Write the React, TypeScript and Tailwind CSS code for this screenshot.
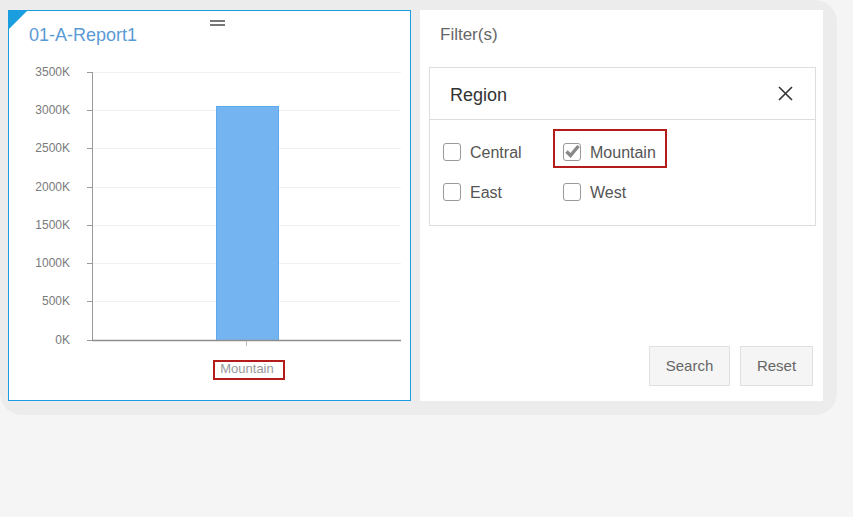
import React from 'react'

const ticks = [
  { label: '3500K', y: 72 },
  { label: '3000K', y: 110 },
  { label: '2500K', y: 148 },
  { label: '2000K', y: 187 },
  { label: '1500K', y: 225 },
  { label: '1000K', y: 263 },
  { label: '500K', y: 301 },
  { label: '0K', y: 340 },
]

const Chart = () => {
  return (
    <svg width="401" height="330" className="block">
      <g transform="translate(-9,-58)">
        {ticks.map((t) => (
          <g key={t.label}>
            {t.y !== 340 && <line x1="93" x2="401" y1={t.y + 0.5} y2={t.y + 0.5} stroke="#f1f1f1" strokeWidth="1" />}
            <line x1="87" x2="92" y1={t.y + 0.5} y2={t.y + 0.5} stroke="#999" strokeWidth="1" />
            <text x="70" y={t.y + 4} textAnchor="end" fontSize="12" fill="#7a7a7a" fontFamily="'Liberation Sans', Arial, sans-serif">
              {t.label}
            </text>
          </g>
        ))}
        <line x1="92.5" x2="92.5" y1="72" y2="341" stroke="#999" strokeWidth="1" />
        <rect x="216.5" y="106.5" width="62" height="234" fill="#74b4f0" stroke="#5ea8ec" strokeWidth="1" />
        <line x1="92" x2="401" y1="340.5" y2="340.5" stroke="#8f8f8f" strokeWidth="1.3" />
        <line x1="246.5" x2="246.5" y1="341" y2="346" stroke="#bbb" strokeWidth="1" />
        <text x="247" y="373" textAnchor="middle" fontSize="13" fill="#999" fontFamily="'Liberation Sans', Arial, sans-serif">
          Mountain
        </text>
        <rect x="214" y="361" width="70" height="18" fill="none" stroke="#b41c1c" strokeWidth="2" />
      </g>
    </svg>
  )
}

const Box = ({ checked }: { checked?: boolean }) => (
  <span className="relative w-[18px] h-[18px] rounded-[3px] border border-[#999] bg-white shrink-0">
    {checked && (
      <svg width="18" height="18" viewBox="0 0 18 18" className="absolute -left-px -top-px">
        <path d="M3.5 8.5 L7.5 12.5 L15.5 3" fill="none" stroke="#888" strokeWidth="3.4" strokeLinejoin="miter" />
      </svg>
    )}
  </span>
)

const Option = ({ label, checked, marked }: { label: string; checked?: boolean; marked?: boolean }) => (
  <label className="relative flex items-center w-[120px] h-[18px]">
    <Box checked={checked} />
    <span className="ml-[9px] mt-[2px] text-[16px] text-[#555] leading-none">{label}</span>
    {marked && <span className="absolute -left-[10px] -top-[14px] w-[114px] h-[39px] border-2 border-[#b41c1c]" />}
  </label>
)

const App = () => {
  return (
    <div className="w-[853px] h-[517px] bg-[#f5f5f5] font-['Liberation_Sans',Arial,sans-serif]">
      <div className="w-[837px] h-[415px] bg-[#ececec] rounded-tr-[22px] rounded-b-[22px] pt-[10px] pl-[8px] flex gap-[9px]">
        {/* report panel */}
        <div className="relative w-[403px] h-[391px] bg-white border border-[#1a9ee0]">
          <span className="absolute left-0 top-0 w-0 h-0 border-t-[18px] border-t-[#1a9ee0] border-r-[18px] border-r-transparent" />
          <span className="absolute left-[201px] top-[9px] w-[15px] h-[2px] bg-[#777]" />
          <span className="absolute left-[201px] top-[13px] w-[15px] h-[2px] bg-[#777]" />
          <div className="h-[47px] pt-[13px] pl-[20px] text-[18px] leading-[22px] text-[#5b9bd5]">01-A-Report1</div>
          <Chart />
        </div>

        {/* filter panel */}
        <div className="w-[403px] h-[391px] bg-white flex flex-col">
          <div className="pt-[14px] pl-[20px] text-[17px] leading-[22px] text-[#666]">Filter(s)</div>
          <div className="mt-[21px] ml-[9px] w-[387px] border border-[#ddd]">
            <div className="h-[52px] border-b border-[#ddd] flex items-center justify-between pl-[20px] pr-[22px]">
              <span className="mt-[3px] text-[18px] text-[#333]">Region</span>
              <svg width="15" height="15" viewBox="0 0 15 15">
                <path d="M1 1 L14 14 M14 1 L1 14" stroke="#333" strokeWidth="1.6" />
              </svg>
            </div>
            <div className="pl-[13px] pt-[23px] pb-[24px] flex flex-col gap-[22px]">
              <div className="flex">
                <Option label="Central" />
                <Option label="Mountain" checked marked />
              </div>
              <div className="flex">
                <Option label="East" />
                <Option label="West" />
              </div>
            </div>
          </div>
          <div className="mt-auto mb-[15px] mr-[10px] flex justify-end gap-[10px]">
            <button className="w-[81px] h-[40px] bg-[#f5f5f5] border border-[#e0e0e0] text-[15px] text-[#666]">Search</button>
            <button className="w-[73px] h-[40px] bg-[#f5f5f5] border border-[#e0e0e0] text-[15px] text-[#666]">Reset</button>
          </div>
        </div>
      </div>
    </div>
  )
}

export default App
